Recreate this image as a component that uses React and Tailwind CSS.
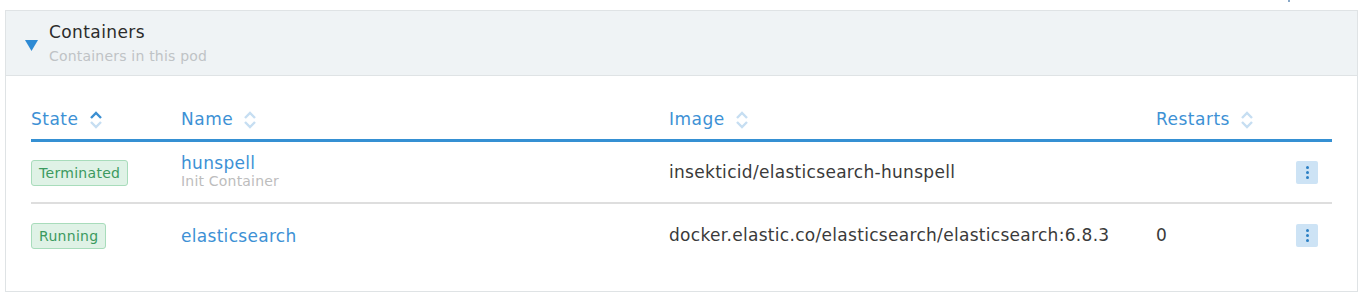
import React from 'react';

const SortIcon = ({ active }) => (
  <svg width="14" height="20" viewBox="0 0 14 20" className="ml-[10px] shrink-0">
    <path d="M2 8 L7 3 L12 8" fill="none" stroke={active ? '#3b8fd2' : '#c6def2'} strokeWidth="2.4" />
    <path d="M2 12 L7 17 L12 12" fill="none" stroke="#c6def2" strokeWidth="2.4" />
  </svg>
);

const Badge = ({ children }) => (
  <span className="inline-block px-[7px] py-[4px] text-[14px] leading-[16px] tracking-[0.3px] text-[#3c9a5f] bg-[#dff2e6] border border-[#a8dcbb] rounded-[3px]">
    {children}
  </span>
);

const ActionButton = () => (
  <button className="w-[23px] h-[23px] flex flex-col items-center justify-center gap-[2px] bg-[#cde3f5] rounded-[2px]">
    <span className="w-[3px] h-[3px] rounded-full bg-[#2b7fc4]"></span>
    <span className="w-[3px] h-[3px] rounded-full bg-[#2b7fc4]"></span>
    <span className="w-[3px] h-[3px] rounded-full bg-[#2b7fc4]"></span>
  </button>
);

const rows = [
  { state: 'Terminated', name: 'hunspell', sub: 'Init Container', image: 'insekticid/elasticsearch-hunspell', restarts: '' },
  { state: 'Running', name: 'elasticsearch', sub: null, image: 'docker.elastic.co/elasticsearch/elasticsearch:6.8.3', restarts: '0' },
];

const App = () => {
  return (
    <div className="w-[1363px] h-[296px] bg-white pt-[10px] px-[5px] font-['DejaVu_Sans',sans-serif] relative">
      <div className="absolute left-[1288px] top-0 w-[2px] h-[2px] bg-[#8aa9c9]"></div>
      <div className="w-[1353px] h-[282px] border border-[#dfe3e5]">
        {/* Header */}
        <div className="h-[65px] bg-[#eff3f5] border-b border-[#dfe3e5] flex items-center pl-[19px]">
          <svg width="13" height="11" viewBox="0 0 13 11" className="mr-[11px] mt-[4px]">
            <path d="M0 0 L13 0 L6.5 11 Z" fill="#2d8ad4" />
          </svg>
          <div className="flex flex-col">
            <h2 className="text-[17px] leading-[22px] tracking-[0.4px] text-[#2b2b2b]">Containers</h2>
            <p className="text-[14px] leading-[20px] tracking-[0.2px] text-[#bfc3c6] mt-[3px]">Containers in this pod</p>
          </div>
        </div>

        {/* Table */}
        <div className="pl-[25px] pr-[25px]">
          <div className="flex items-center h-[66px] pt-[24px] border-b-[3px] border-[#3590d3] text-[#3d91d5] text-[17px] tracking-[0.5px]">
            <div className="w-[150px] flex items-center">State<SortIcon active /></div>
            <div className="w-[488px] flex items-center">Name<SortIcon /></div>
            <div className="w-[487px] flex items-center">Image<SortIcon /></div>
            <div className="flex-1 flex items-center">Restarts<SortIcon /></div>
          </div>
          {rows.map((r, i) => (
            <div
              key={r.name}
              className={`flex items-center h-[62px] text-[17px] tracking-[0.3px] pt-[1px] ${i === 0 ? 'border-b-2 border-[#dedede]' : ''}`}
            >
              <div className="w-[150px]"><Badge>{r.state}</Badge></div>
              <div className={`w-[488px] flex flex-col ${r.sub ? '-mt-[3px]' : ''}`}>
                <span className="text-[#3d91d5] leading-[20px]">{r.name}</span>
                {r.sub && <span className="text-[14px] leading-[16px] tracking-[0.2px] text-[#bdbdbd]">{r.sub}</span>}
              </div>
              <div className="w-[487px] text-[#3a3a3a]">{r.image}</div>
              <div className="flex-1 text-[#3a3a3a]">{r.restarts}</div>
              <div className="w-[36px] flex justify-end pr-[14px]"><ActionButton /></div>
            </div>
          ))}
        </div>
      </div>
    </div>
  );
};

export default App;
